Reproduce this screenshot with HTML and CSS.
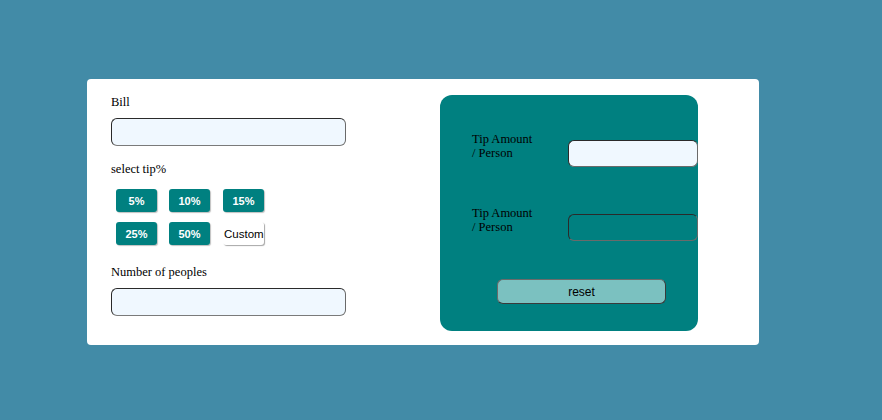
FILE: index.html
```html
<!DOCTYPE html>
<html>
<head>
<meta charset="utf-8">
<link rel="stylesheet" href="styles.css">
</head>
<body>
<div class="card">
  <div class="left">
    <div class="label">Bill</div>
    <input class="field" type="text">
    <div class="label tip-label">select tip%</div>
    <div class="tips">
      <button class="tip">5%</button>
      <button class="tip">10%</button>
      <button class="tip">15%</button>
      <button class="tip">25%</button>
      <button class="tip">50%</button>
      <button class="tip custom">Custom</button>
    </div>
    <div class="label people-label">Number of peoples</div>
    <input class="field" type="text">
  </div>
  <div class="panel">
    <div class="row">
      <div class="rlabel">Tip Amount / Person</div>
      <input class="out light" type="text">
    </div>
    <div class="row second">
      <div class="rlabel">Tip Amount / Person</div>
      <input class="out dark" type="text">
    </div>
    <button class="reset">reset</button>
  </div>
</div>
</body>
</html>
```
FILE: styles.css
```css
html, body {
  margin: 0;
  padding: 0;
}
body {
  background: #428ba7;
  width: 882px;
  height: 420px;
  overflow: hidden;
  font-family: "Liberation Serif", "Times New Roman", serif;
}
.card {
  margin: 79px 0 0 87px;
  width: 672px;
  height: 266px;
  background: #fff;
  border-radius: 4px;
  display: flex;
  box-sizing: border-box;
}
.left {
  padding: 16px 0 0 24px;
  width: 329px;
  display: flex;
  flex-direction: column;
  align-items: flex-start;
}
.label {
  font-size: 12.5px;
  line-height: 14px;
  color: #000;
}
.field {
  margin-top: 9px;
  width: 235px;
  height: 28px;
  box-sizing: border-box;
  background: #f0f8ff;
  border: 1px solid #2a2a2a;
  border-bottom-color: #7a7a7a;
  border-right-color: #6a6a6a;
  border-radius: 6px;
  padding: 0;
  outline: none;
}
.tip-label {
  margin-top: 16px;
}
.tips {
  margin: 13px 0 0 5px;
  display: grid;
  grid-template-columns: 41px 41px 41px;
  column-gap: 12px;
  row-gap: 10px;
}
.tip {
  width: 41px;
  height: 23px;
  padding: 0;
  border: none;
  border-radius: 3px;
  background: #008080;
  color: #fff;
  font-family: "Liberation Sans", Arial, sans-serif;
  font-weight: bold;
  font-size: 11px;
  box-shadow: 1px 1px 1px rgba(0, 0, 0, 0.25);
  overflow: visible;
  white-space: nowrap;
  display: flex;
  align-items: center;
  justify-content: center;
}
.tip:nth-child(3), .tip:nth-child(6) {
  margin-left: 1px;
}
.tip.custom {
  background: #fff;
  color: #000;
  font-weight: normal;
  font-size: 11.5px;
  justify-content: flex-start;
  padding-left: 1px;
  box-shadow: 1px 1px 1px rgba(0, 0, 0, 0.35);
}
.people-label {
  margin-top: 20px;
}
.panel {
  margin-top: 16px;
  width: 258px;
  height: 236px;
  background: #008080;
  border-radius: 12px;
  box-sizing: border-box;
  padding-top: 37px;
  display: flex;
  flex-direction: column;
  align-items: flex-start;
}
.row {
  display: flex;
  align-items: flex-start;
  width: 100%;
}
.row.second {
  margin-top: 39px;
}
.rlabel {
  margin-left: 32px;
  width: 64px;
  flex: none;
  font-size: 12.5px;
  line-height: 14px;
  color: #000;
}
.out {
  margin-left: 32px;
  margin-top: 8px;
  width: 130px;
  height: 27px;
  flex: none;
  box-sizing: border-box;
  border: 1px solid #2a2a2a;
  border-bottom-color: #6a6a6a;
  border-right-color: #6a6a6a;
  border-radius: 6px;
  padding: 0;
  outline: none;
}
.out.light {
  background: #f0f8ff;
}
.out.dark {
  background: transparent;
}
.reset {
  margin-top: 38px;
  margin-left: 57px;
  width: 169px;
  height: 25px;
  box-sizing: border-box;
  background: #7bc1c0;
  border: 1px solid #3a3a3a;
  border-top-color: #6a6a6a;
  border-left-color: #6a6a6a;
  border-radius: 6px;
  font-family: "Liberation Sans", Arial, sans-serif;
  font-size: 12px;
  color: #000;
  padding: 0;
}
```
